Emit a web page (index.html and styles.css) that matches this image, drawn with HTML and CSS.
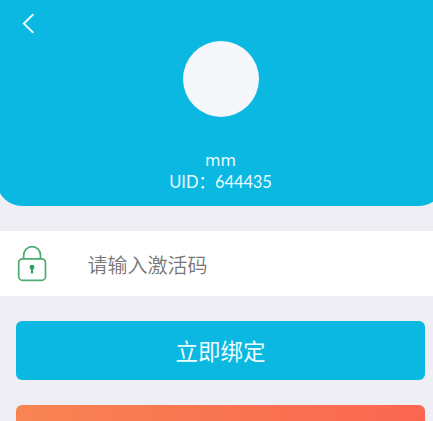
FILE: index.html
```html
<!DOCTYPE html>
<html lang="zh-CN">
<head>
<meta charset="utf-8">
<title>激活码绑定</title>
<link rel="stylesheet" href="styles.css">
</head>
<body>
<main class="screen">
  <header class="profile">
    <svg class="back" viewBox="0 0 14 22" aria-hidden="true"><path d="M11.8 1.8 2.9 10.6 11.8 19.2"/></svg>
    <div class="avatar"></div>
    <div class="name">mm</div>
    <div class="uid">UID：<span class="number">644435</span></div>
  </header>
  <section class="code-row">
    <svg class="lock" viewBox="0 0 30 37" aria-hidden="true">
      <path class="line" d="M6.7 13.8V10.3a8.4 8.6 0 0 1 16.8 0V13.8"/>
      <rect class="line" x="1.7" y="13.8" width="26.8" height="21.6" rx="4"/>
      <circle cx="15" cy="22.2" r="2.4"/>
      <path d="M13.9 22h2.2v6.6h-2.2z"/>
    </svg>
    <span class="placeholder">请输入激活码</span>
  </section>
  <div class="actions">
    <div class="button bind">立即绑定</div>
    <div class="button secondary"></div>
  </div>
</main>
</body>
</html>
```
FILE: styles.css
```css
* { box-sizing: border-box; }
html, body { margin: 0; height: 421px; overflow: hidden; }
body {
  background: #efeef4;
  font-family: Lato, "Noto Sans CJK SC", sans-serif;
}
.screen { width: 441px; height: 421px; overflow: hidden; }
.profile {
  display: flex;
  flex-direction: column;
  align-items: center;
  width: 447px;
  height: 205.5px;
  margin-left: -3px;
  padding-top: 13px;
  border-radius: 0 0 25px 25px;
  background: #0ab8e2;
  color: #e9fbff;
}
.back { width: 14px; height: 22px; margin-left: 24px; align-self: flex-start; }
.back path { fill: none; stroke: #e9fbff; stroke-width: 2; stroke-linecap: round; }
.avatar {
  width: 76px;
  height: 76px;
  margin-top: 6px;
  border-radius: 50%;
  background: #f5f7fa;
}
.name {
  margin-top: 32px;
  font: 16.5px/22px "Noto Sans", sans-serif;
}
.uid {
  display: flex;
  font-size: 16.5px;
  line-height: 22px;
}
.number { letter-spacing: -0.1px; }
.code-row {
  display: flex;
  align-items: center;
  height: 65.5px;
  margin-top: 25px;
  padding-left: 17px;
  background: #fff;
}
.lock { width: 30px; height: 37px; fill: #35a160; }
.lock .line { fill: none; stroke: #4bab70; stroke-width: 1.7; }
.placeholder {
  margin: 3px 0 0 40.5px;
  color: #777;
  font-size: 20px;
  font-weight: 350;
  line-height: 30px;
}
.actions { display: grid; gap: 25.5px; padding: 25px 16px 0; }
.button { height: 58.5px; border-radius: 6px; }
.bind {
  display: flex;
  align-items: center;
  justify-content: center;
  background: #0ab8e2;
  color: #effcff;
  font-size: 22.5px;
}
.secondary { background: linear-gradient(90deg, #f88453, #fa6650); }
```
